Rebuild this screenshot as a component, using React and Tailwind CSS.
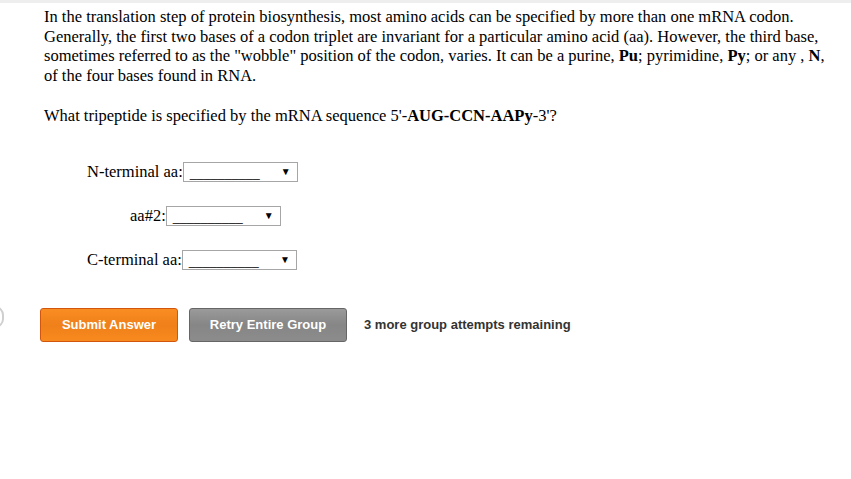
const Dropdown = () => (
  <div className="relative h-[20px] w-[115px] border border-[#a6a6a6] bg-white">
    <span className="absolute left-[6px] top-[1px] text-[14px] leading-[20px] text-black">__________</span>
    <span className="absolute right-[6px] top-[3px] text-[10px] leading-[12px] text-black">▼</span>
  </div>
);

const Row = ({ label, pad }) => (
  <div className={`flex items-center ${pad}`}>
    <span className="text-[16.5px] leading-[20px]">{label}</span>
    <Dropdown />
  </div>
);

export default function App() {
  return (
    <div className="relative min-h-[479px] w-[851px] overflow-hidden bg-white font-['Liberation_Serif',serif] text-black">
      <div className="h-[3px] bg-[#eeeeee]" />
      <div className="absolute left-[-14px] top-[306px] h-[22px] w-[18px] rounded-full border-2 border-[#cfcfcf]" />
      <div className="pl-[44px] pt-[4px] text-[16.5px] leading-[19.7px]">
        <p className="w-[790px]">
          In the translation step of protein biosynthesis, most amino acids can be specified by more than one mRNA codon.
          Generally, the first two bases of a codon triplet are invariant for a particular amino acid (aa). However, the third base,
          sometimes referred to as the "wobble" position of the codon, varies. It can be a purine, <b>Pu</b>; pyrimidine, <b>Py</b>; or any , <b>N</b>,
          of the four bases found in RNA.
          <br />
          <br />
          What tripeptide is specified by the mRNA sequence 5'-<b>AUG-CCN-AAPy</b>-3'?
        </p>
      </div>
      <div className="mt-[37px] flex flex-col gap-[24px]">
        <Row label="N-terminal aa:" pad="pl-[87px]" />
        <Row label="aa#2:" pad="pl-[130px]" />
        <Row label="C-terminal aa:" pad="pl-[87px]" />
      </div>
      <div className="mt-[38px] flex items-center pl-[40px] font-['Liberation_Sans',sans-serif]">
        <button className="h-[34px] w-[138px] rounded-[3px] border border-[#d2560c] bg-gradient-to-b from-[#f98d22] via-[#f0801a] to-[#f88a1e] text-[13px] font-bold text-white">
          Submit Answer
        </button>
        <button className="ml-[11px] h-[34px] w-[158px] rounded-[3px] border border-[#666666] bg-gradient-to-b from-[#9a9a9a] via-[#868686] to-[#8c8c8c] text-[13px] font-bold text-white">
          Retry Entire Group
        </button>
        <span className="ml-[17px] text-[13px] font-bold text-[#333333]">3 more group attempts remaining</span>
      </div>
    </div>
  );
}
